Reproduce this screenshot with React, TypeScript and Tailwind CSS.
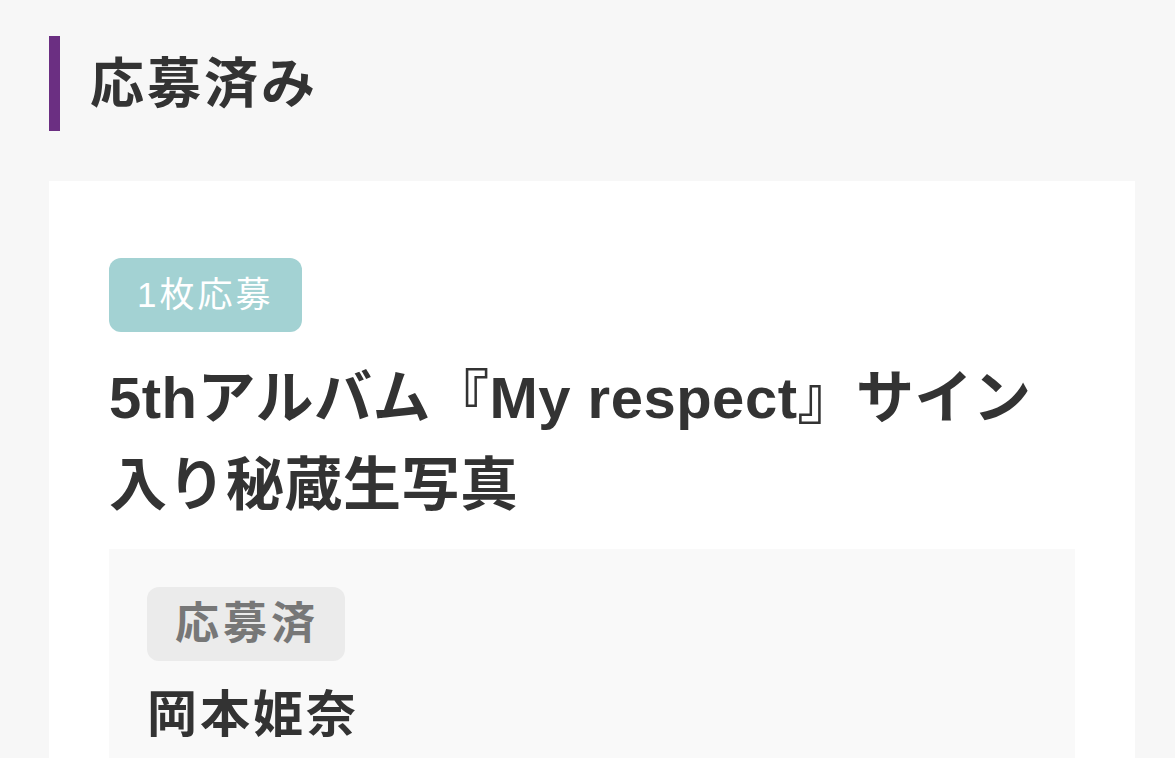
export default function App() {
  return (
    <div
      className="min-h-[758px] bg-[#f7f7f7] pl-[49px] pr-[40px] pt-[36px] text-[#333]"
      style={{ fontFamily: '"Liberation Sans", "Noto Sans CJK JP", sans-serif' }}
    >
      {/* Section heading */}
      <div className="flex h-[95px] items-center border-l-[11px] border-[#6b2f82] pl-[30px]">
        <h2 className="text-[54px] font-bold leading-none tracking-[3px]">応募済み</h2>
      </div>

      {/* Entry card */}
      <div className="mt-[50px] bg-white px-[60px] pt-[77px]">
        <span className="inline-flex h-[74px] items-center rounded-[12px] bg-[#a3d2d3] pl-[28px] pr-[29px] text-[35px] tracking-[3px] text-white">
          1枚応募
        </span>
        <h3 className="mt-[22px] text-[58px] font-bold leading-[87px] tracking-[0.5px]">
          5thアルバム『My respect』サイン入り秘蔵生写真
        </h3>
        <div className="mt-[21px] bg-[#f9f9f9] px-[38px] pt-[38px] pb-[40px]">
          <span className="inline-flex h-[74px] items-center rounded-[12px] bg-[#ebebeb] pl-[28px] pr-[26px] text-[44px] font-bold tracking-[4px] text-[#777]">
            応募済
          </span>
          <p className="mt-[23px] text-[50px] font-bold leading-tight tracking-[3px]">岡本姫奈</p>
        </div>
      </div>
    </div>
  );
}
